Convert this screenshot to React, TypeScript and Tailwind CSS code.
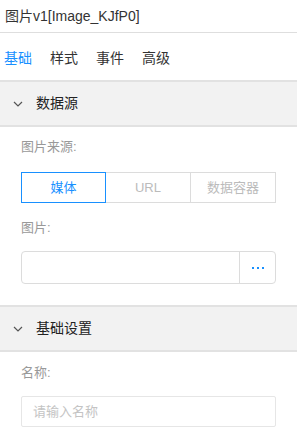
const font = "font-['Liberation_Sans','Noto_Sans_CJK_SC',sans-serif]";

function Chevron() {
  return (
    <svg width="10" height="6" viewBox="0 0 10 6" className="mx-[13px]">
      <path d="M1 1l4 4 4-4" fill="none" stroke="#555" strokeWidth="1.2" />
    </svg>
  );
}

function SectionHeader({ title }: { title: string }) {
  return (
    <div className="flex h-[47px] items-center border-y-2 border-[#e2e2e2] bg-[#f2f2f2] text-[14px] text-[#222]">
      <Chevron />
      <span>{title}</span>
    </div>
  );
}

export default function App() {
  const sources = ["媒体", "URL", "数据容器"];
  return (
    <div className={`w-[297px] h-[445px] overflow-hidden bg-white ${font}`}>
      <div className="flex h-[33px] items-center border-b border-[#dedede] pl-[5px] text-[14px] text-[#333]">
        图片v1[Image_KJfP0]
      </div>

      <div className="flex h-[47px] items-center gap-[18px] pl-[4px] pt-[3px] text-[14px] text-[#333]">
        <span className="text-[#1890ff]">基础</span>
        <span>样式</span>
        <span>事件</span>
        <span>高级</span>
      </div>

      <SectionHeader title="数据源" />

      <div className="px-[21px] pt-[10px] pb-[21px]">
        <div className="text-[13px] leading-[20px] text-[#999]">图片来源:</div>
        <div className="mt-[15px] grid h-[31px] grid-cols-3 text-[13px]">
          {sources.map((s, i) => (
            <div
              key={s}
              className={
                i === 0
                  ? "flex items-center justify-center border border-solid border-[#1890ff] text-[#1890ff]"
                  : "flex items-center justify-center border border-l-0 border-solid border-[#dcdcdc] text-[#bbb]"
              }
            >
              {s}
            </div>
          ))}
        </div>

        <div className="mt-[15px] text-[13px] leading-[20px] text-[#999]">图片:</div>
        <div className="mt-[13px] flex h-[33px] rounded-[4px] border border-[#dcdcdc]">
          <div className="flex-1" />
          <div className="flex w-[36px] items-center justify-center gap-[3px] border-l border-[#dcdcdc]">
            <span className="h-[2px] w-[2px] bg-[#1890ff]" />
            <span className="h-[2px] w-[2px] bg-[#1890ff]" />
            <span className="h-[2px] w-[2px] bg-[#1890ff]" />
          </div>
        </div>
      </div>

      <SectionHeader title="基础设置" />

      <div className="px-[21px] pt-[11px]">
        <div className="text-[13px] leading-[20px] text-[#999]">名称:</div>
        <div className="mt-[13px] flex h-[31px] items-center rounded-[2px] border border-[#e6e6e6] px-[11px] text-[13px] text-[#c4c4c4]">
          请输入名称
        </div>
      </div>
    </div>
  );
}
